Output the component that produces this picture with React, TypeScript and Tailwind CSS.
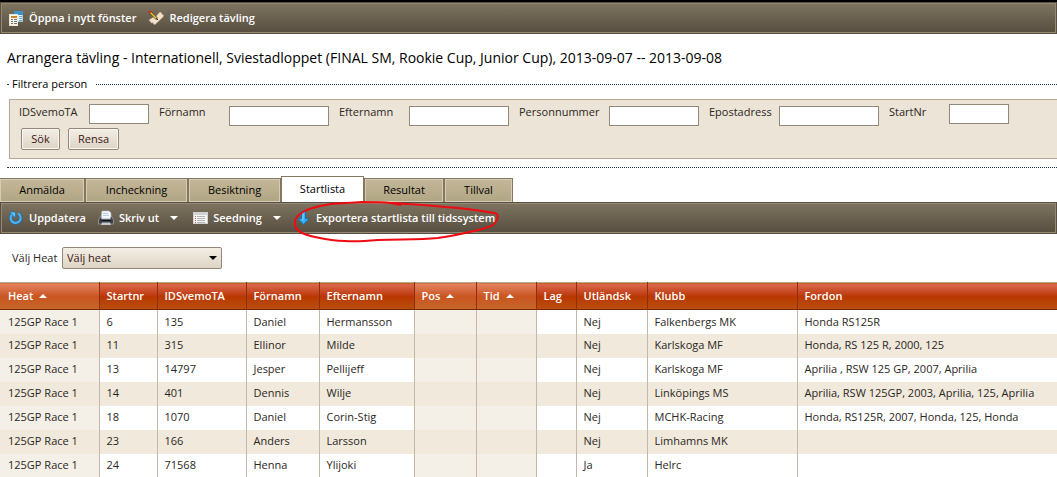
import { useState } from 'react';
import type { ReactNode } from 'react';
import clsx from 'clsx';

const tabs = [
  { name: 'Anmälda', width: 'w-[85px]' },
  { name: 'Incheckning', width: 'w-[103px]' },
  { name: 'Besiktning', width: 'w-[93px]' },
  { name: 'Startlista', width: 'w-[83px]' },
  { name: 'Resultat', width: 'w-[80px]' },
  { name: 'Tillval', width: 'w-[69px]' },
];

const fields = [
  { id: 'idsvemo', label: 'IDSvemoTA', labelWidth: 'w-[70px]', inputWidth: 'w-[60px]', low: false },
  { id: 'fornamn', label: 'Förnamn', labelWidth: 'w-[70px]', inputWidth: 'w-[100px]', low: true },
  { id: 'efternamn', label: 'Efternamn', labelWidth: 'w-[70px]', inputWidth: 'w-[100px]', low: true },
  { id: 'personnummer', label: 'Personnummer', labelWidth: 'w-[90px]', inputWidth: 'w-[90px]', low: true },
  { id: 'epost', label: 'Epostadress', labelWidth: 'w-[70px]', inputWidth: 'w-[100px]', low: true },
  { id: 'startnr', label: 'StartNr', labelWidth: 'w-[60px]', inputWidth: 'w-[60px]', low: false },
];

const columns = [
  { name: 'Heat', width: 'w-[99px]', sorted: true },
  { name: 'Startnr', width: 'w-[58px]' },
  { name: 'IDSvemoTA', width: 'w-[89px]' },
  { name: 'Förnamn', width: 'w-[73px]' },
  { name: 'Efternamn', width: 'w-[95px]' },
  { name: 'Pos', width: 'w-[62px]', sorted: true },
  { name: 'Tid', width: 'w-[60px]', sorted: true },
  { name: 'Lag', width: 'w-[40px]' },
  { name: 'Utländsk', width: 'w-[71px]' },
  { name: 'Klubb', width: 'w-[150px]' },
  { name: 'Fordon', width: '' },
];

const rows = [
  ['125GP Race 1', '6', '135', 'Daniel', 'Hermansson', '', '', '', 'Nej', 'Falkenbergs MK', 'Honda RS125R'],
  ['125GP Race 1', '11', '315', 'Ellinor', 'Milde', '', '', '', 'Nej', 'Karlskoga MF', 'Honda, RS 125 R, 2000, 125'],
  ['125GP Race 1', '13', '14797', 'Jesper', 'Pellijeff', '', '', '', 'Nej', 'Karlskoga MF', 'Aprilia , RSW 125 GP, 2007, Aprilia'],
  ['125GP Race 1', '14', '401', 'Dennis', 'Wilje', '', '', '', 'Nej', 'Linköpings MS', 'Aprilia, RSW 125GP, 2003, Aprilia, 125, Aprilia'],
  ['125GP Race 1', '18', '1070', 'Daniel', 'Corin-Stig', '', '', '', 'Nej', 'MCHK-Racing', 'Honda, RS125R, 2007, Honda, 125, Honda'],
  ['125GP Race 1', '23', '166', 'Anders', 'Larsson', '', '', '', 'Nej', 'Limhamns MK', ''],
  ['125GP Race 1', '24', '71568', 'Henna', 'Ylijoki', '', '', '', 'Ja', 'Helrc', ''],
];

function WindowIcon() {
  return (
    <svg className="size-4 shrink-0" viewBox="0 0 16 16">
      <rect x="6.500" y="1.500" width="8" height="10" fill="#e9f1f7" stroke="#a9c6da" />
      <path d="M6 1h9v4H6z" fill="#3d94c8" />
      <path d="M11 6.500h3M11 8.500h3M11 10.500h3" stroke="#74a5c4" />
      <rect x="1.500" y="4.500" width="8" height="11" fill="#f7f5ef" stroke="#e9e6dd" />
      <path d="M3 6h6v2H3z" fill="#c9862c" />
      <path d="M3 9.500h2M6 9.500h3M3 11.500h2M6 11.500h3M3 13.500h2M6 13.500h3" stroke="#77736b" />
    </svg>
  );
}

function EditIcon() {
  return (
    <svg className="size-4 shrink-0" viewBox="0 0 16 16">
      <path d="m1 10 2.500-1.500L7 6l1 .500L12 2l1.500 1 .500 1.500 1.500.500-.500 2L7 14.500 5.500 14l-.500-1.500-1.500.500z" fill="#f1dfcb" stroke="#d3bb9f" strokeWidth=".5" />
      <path d="m2 2 7 7" stroke="#4a3d22" strokeWidth="2.500" />
      <path d="m2 2 6.500 6.500" stroke="#f0c52e" strokeWidth="1.500" />
      <path d="m8.500 8.500 1.500 1.500" stroke="#2c2418" strokeWidth="1" />
      <path d="m.700.700 2 2" stroke="#d92d20" strokeWidth="2.200" />
    </svg>
  );
}

function RefreshIcon() {
  return (
    <svg className="size-4 shrink-0" viewBox="0 0 16 16">
      <path d="M10 3.500a5 5 0 1 1-6 1" fill="none" stroke="#1d6fae" strokeWidth="3.500" />
      <path d="M10 3.500a5 5 0 1 1-6 1" fill="none" stroke="#4fb4ee" strokeWidth="2" />
      <path d="M1.500 2h6v6z" fill="#63c3f5" stroke="#1d6fae" strokeWidth=".7" />
    </svg>
  );
}

function PrintIcon() {
  return (
    <svg className="size-4 shrink-0" viewBox="0 0 16 16">
      <path d="M4 1h7l2 2v6H3z" fill="#f4f7fa" stroke="#b9c0c7" strokeWidth=".7" />
      <path d="M5 3.500h5M5 5.500h6" stroke="#b5cfe2" />
      <path d="m2 7-1.500 3v4h15v-4L14 7h-1.500v2h-9V7z" fill="#3e4147" stroke="#a5a7aa" strokeWidth=".7" />
      <path d="M4 12.500h8l1 2.500H3z" fill="#c5c9cc" />
      <path d="M3 10.500h10" stroke="#14161a" />
    </svg>
  );
}

function ListIcon() {
  return (
    <svg className="size-4 shrink-0" viewBox="0 0 16 16">
      <rect x="1.500" y="2.500" width="14" height="11" fill="#f5f5f3" stroke="#d4d2cc" />
      <path d="M2 3h13v2H2z" fill="#cfd3d6" />
      <path d="M3 6.500h1M3 8.500h1M3 10.500h1M3 12.500h1" stroke="#c85f55" />
      <path d="M5 6.500h8M5 8.500h8M5 10.500h8M5 12.500h8" stroke="#b2b6b8" />
    </svg>
  );
}

function DownloadIcon() {
  return (
    <svg className="size-4 shrink-0" viewBox="0 0 16 16">
      <path d="M6.500 1.500h4v7h3.500L8.500 14.500 3 8.500h3.500z" fill="#35adf0" stroke="#1672b4" />
      <path d="M8 2.500v8" stroke="#8bd6fb" />
    </svg>
  );
}

function Caret({ up = false }: { up?: boolean }) {
  return (
    <svg className="h-1 w-2 shrink-0" viewBox="0 0 8 4">
      <path d={up ? 'M0 4l4-4 4 4z' : 'M0 0h8L4 4z'} fill="currentColor" />
    </svg>
  );
}

function Toolbar({ children }: { children: ReactNode }) {
  return (
    <div className="border border-[#5a4f43] bg-[#8b7f6c]">
      <div className="flex h-[30px] items-center border border-[#938873] bg-linear-to-b from-[#7d735f] to-[#594f41] text-[11px] font-semibold text-white">
        {children}
      </div>
    </div>
  );
}

function ToolButton({ icon, label, menu = false, className }: { icon: ReactNode; label: string; menu?: boolean; className?: string }) {
  return (
    <button className={clsx('flex items-center gap-[5px] whitespace-nowrap', className)}>
      {icon}
      <span>{label}</span>
      {menu && <span className="ml-[6px]"><Caret /></span>}
    </button>
  );
}

function FilterPanel() {
  const button =
    'h-[22px] rounded-xs border border-[#94877a] bg-linear-to-b from-[#f3eee5] to-[#ddd4c5] text-[11px] leading-[18px] text-[#3a1712] shadow-[inset_0_0_0_1px_#faf7f2]';
  return (
    <fieldset className="mt-2 ml-[7px] border-y border-dotted border-[#24404a] pt-[7px] pb-2">
      <legend className="ml-[2px] pr-2 pl-[3px] text-[11px] leading-4 text-black">Filtrera person</legend>
      <form className="ml-[2px] h-[60px] border border-r-0 border-[#b9a994] bg-[#ebe4d7] pt-1 pl-[9px]" onSubmit={(e) => e.preventDefault()}>
        <div className="flex h-6 gap-[10px]">
          {fields.map((f) => (
            <div key={f.id} className="flex items-start">
              <label htmlFor={f.id} className={clsx('shrink-0 text-[11px] leading-4', f.labelWidth)}>{f.label}</label>
              <input id={f.id} type="text" className={clsx('h-5 border border-[#938778] bg-white px-1 text-[11px]', f.inputWidth, f.low && 'mt-[2px]')} />
            </div>
          ))}
        </div>
        <div className="flex gap-2 pl-[2px]">
          <button type="submit" className={clsx(button, 'w-[39px]')}>Sök</button>
          <button type="reset" className={clsx(button, 'w-[51px]')}>Rensa</button>
        </div>
      </form>
    </fieldset>
  );
}

function StartTable() {
  return (
    <table className="w-full table-fixed border-collapse text-left text-[11px]">
      <thead>
        <tr className="h-[27px] border-t border-b border-t-[#b5ab8e] border-b-[#762709]">
          {columns.map((c) => (
            <th
              key={c.name}
              className={clsx(
                'border-r border-[#8c2f0a] px-[7px] font-semibold text-white first:pl-2 last:border-r-0',
                c.width,
                c.sorted
                  ? 'bg-linear-to-b from-[#e48560] via-[#c95420] to-[#c5672a]'
                  : 'bg-linear-to-b from-[#dd6a4b] via-[#b93600] to-[#b9500f]',
              )}
            >
              <span className="flex items-center gap-[6px]">
                {c.name}
                {c.sorted && <Caret up />}
              </span>
            </th>
          ))}
        </tr>
      </thead>
      <tbody>
        {rows.map((row) => (
          <tr key={row[1]} className="group h-6 bg-white even:bg-[#f0e9dc]">
            {row.map((cell, i) => (
              <td
                key={columns[i].name}
                className={clsx(
                  'border-r border-[#c5b7aa] px-[7px] whitespace-nowrap first:pl-2 last:border-r-0',
                  columns[i].sorted && 'group-odd:bg-[#f4f0e8]',
                )}
              >
                {cell}
              </td>
            ))}
          </tr>
        ))}
      </tbody>
    </table>
  );
}

export default function App() {
  const [active, setActive] = useState('Startlista');

  return (
    <div className="min-h-screen overflow-hidden bg-white font-['Open_Sans','Noto_Sans',sans-serif] text-[#2b2723]">
      <div className="border-t-2 border-black">
        <Toolbar>
          <ToolButton className="ml-[6px]" icon={<WindowIcon />} label="Öppna i nytt fönster" />
          <ToolButton className="ml-3" icon={<EditIcon />} label="Redigera tävling" />
        </Toolbar>
      </div>
      <h1 className="mt-[14px] pl-[7px] text-[14px] leading-5 text-black">
        Arrangera tävling - Internationell, Sviestadloppet (FINAL SM, Rookie Cup, Junior Cup), 2013-09-07 -- 2013-09-08
      </h1>
      <FilterPanel />
      <div role="tablist" className="mt-2 flex h-[26px] items-end">
        {tabs.map((tab) => (
          <button
            key={tab.name}
            role="tab"
            aria-selected={tab.name === active}
            onClick={() => setActive(tab.name)}
            className={clsx(
              'border border-b-0 border-[#85765f] text-[11px] text-black first:border-l-0',
              tab.width,
              tab.name === active
                ? 'h-[26px] bg-white'
                : 'h-6 bg-linear-to-b from-[#c3b799] to-[#b0a583] shadow-[inset_0_0_0_1px_#d5cbb7]',
            )}
          >
            {tab.name}
          </button>
        ))}
      </div>
      <Toolbar>
        <ToolButton className="ml-[6px]" icon={<RefreshIcon />} label="Uppdatera" />
        <ToolButton className="ml-3" icon={<PrintIcon />} label="Skriv ut" menu />
        <ToolButton className="ml-[14px]" icon={<ListIcon />} label="Seedning" menu />
        <div className="relative ml-[14px]">
          <ToolButton icon={<DownloadIcon />} label="Exportera startlista till tidssystem" />
          <svg className="pointer-events-none absolute -top-2.5 -left-0.5 h-[43px] w-[206px]" viewBox="0 0 206 43" fill="none" stroke="#f00a12" strokeWidth="2">
            <path d="M108 5 97 3C88 2 78 2 68 2 58 3 48 3 38 4 26 6 16 8 10 12 3 16 1 20 2 25c1 7 10 10 20 12 9 2 20 4 30 4 11 1 22 0 33-1 22-1 40 0 60-2 14-2 28-5 40-8 9-2 15-4 17-7 3-5 5-9-1-10-18-3-32-5-49-6-18-2-36-3-54-4" />
          </svg>
        </div>
      </Toolbar>
      <div className="flex items-center pt-[13px] pb-[13px] pl-3 text-[11px]">
        <label htmlFor="heat" className="w-[50px] whitespace-nowrap">Välj Heat</label>
        <div className="relative flex">
          <select id="heat" className="h-[22px] w-40 appearance-none rounded-xs border border-[#94877a] bg-linear-to-b from-[#f3eee5] to-[#ddd4c5] pl-1 text-[11px] text-[#3a1712]">
            <option>Välj heat</option>
          </select>
          <span className="pointer-events-none absolute top-[9px] right-[5px] flex text-black"><Caret /></span>
        </div>
      </div>
      <StartTable />
    </div>
  );
}
